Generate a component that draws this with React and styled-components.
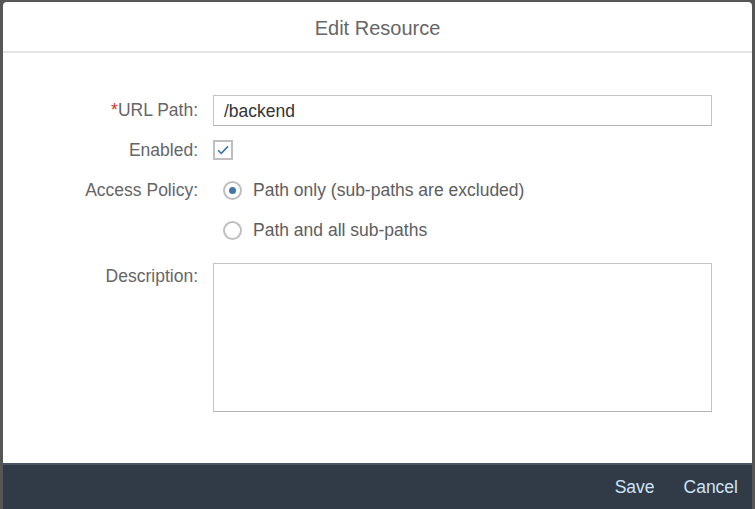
import styled, { createGlobalStyle } from "styled-components";

const GlobalStyle = createGlobalStyle`
  html, body {
    margin: 0;
    padding: 0;
    height: 100%;
    background-color: #565656;
    font-family: "Liberation Sans", Arial, sans-serif;
  }
  #root {
    height: 100%;
  }
`;

const Backdrop = styled.div`
  height: 100vh;
  padding: 2px 3px 0 3px;
  box-sizing: border-box;
  overflow: hidden;
`;

const Dialog = styled.section`
  height: 100%;
  background-color: #ffffff;
  border-radius: 4px 4px 0 0;
  display: flex;
  flex-direction: column;
  overflow: hidden;
`;

const Header = styled.header`
  height: 46px;
  padding-top: 3px;
  border-bottom: 2px solid #e5e5e5;
  display: flex;
  justify-content: center;
  align-items: center;
  font-size: 20px;
  color: #666666;
`;

const Body = styled.main`
  flex: 1;
  padding-top: 42px;
  display: flex;
  flex-direction: column;
`;

const Row = styled.div`
  display: grid;
  grid-template-columns: 195px 499px;
  column-gap: 15px;
  align-items: ${(p) => (p.$top ? "start" : "center")};
  height: ${(p) => p.$height}px;
  margin-top: ${(p) => p.$gap || 0}px;
`;

const Label = styled.label`
  text-align: right;
  font-size: 17.5px;
  color: #666666;
  padding-top: ${(p) => p.$offset || 0}px;
`;

const Required = styled.span`
  color: #d0312d;
`;

const TextInput = styled.div`
  height: 31px;
  box-sizing: border-box;
  border: 1px solid #c4c4c4;
  border-bottom-color: #b3b3b3;
  display: flex;
  align-items: center;
  padding-left: 10px;
  padding-top: 1px;
  font-size: 17.5px;
  color: #333333;
`;

const Checkbox = styled.span`
  width: 20px;
  height: 20px;
  box-sizing: border-box;
  border: 2px solid #bfbfbf;
  display: flex;
  justify-content: center;
  align-items: center;
`;

const RadioOption = styled.div`
  display: flex;
  align-items: center;
  gap: 11px;
  padding-left: 10px;
  font-size: 17.5px;
  color: #5e5e5e;
`;

const RadioCircle = styled.span`
  width: 19px;
  height: 19px;
  box-sizing: border-box;
  border-radius: 50%;
  border: 2px solid #bfbfbf;
  display: flex;
  justify-content: center;
  align-items: center;
  &::after {
    content: "";
    width: 7px;
    height: 7px;
    border-radius: 50%;
    background-color: ${(p) => (p.$checked ? "#3f77a8" : "transparent")};
  }
`;

const TextArea = styled.div`
  height: 149px;
  box-sizing: border-box;
  border: 1px solid #c4c4c4;
  border-bottom-color: #b3b3b3;
`;

const Footer = styled.footer`
  height: 44px;
  background-color: #303b47;
  border-top: 2px solid #4a5561;
  display: flex;
  justify-content: flex-end;
  align-items: center;
  gap: 29px;
  padding-right: 14px;
  padding-top: 1px;
  box-sizing: border-box;
  height: 46px;
`;

const FooterButton = styled.span`
  font-size: 17.5px;
  color: #cfe3f5;
`;

export default function App() {
  return (
    <>
      <GlobalStyle />
      <Backdrop>
        <Dialog>
          <Header>Edit Resource</Header>
          <Body>
            <Row $height={31}>
              <Label>
                <Required>*</Required>URL Path:
              </Label>
              <TextInput>/backend</TextInput>
            </Row>
            <Row $height={40} $gap={4}>
              <Label>Enabled:</Label>
              <Checkbox>
                <svg width="12" height="10" viewBox="0 0 12 10">
                  <path d="M1 5.2 L4.3 8.4 L11 1.4" fill="none" stroke="#3f77a8" strokeWidth="1.6" />
                </svg>
              </Checkbox>
            </Row>
            <Row $height={40}>
              <Label>Access Policy:</Label>
              <RadioOption>
                <RadioCircle $checked />
                Path only (sub-paths are excluded)
              </RadioOption>
            </Row>
            <Row $height={40}>
              <span />
              <RadioOption>
                <RadioCircle />
                Path and all sub-paths
              </RadioOption>
            </Row>
            <Row $height={149} $gap={13} $top>
              <Label $offset={3}>Description:</Label>
              <TextArea />
            </Row>
          </Body>
          <Footer>
            <FooterButton>Save</FooterButton>
            <FooterButton>Cancel</FooterButton>
          </Footer>
        </Dialog>
      </Backdrop>
    </>
  );
}
